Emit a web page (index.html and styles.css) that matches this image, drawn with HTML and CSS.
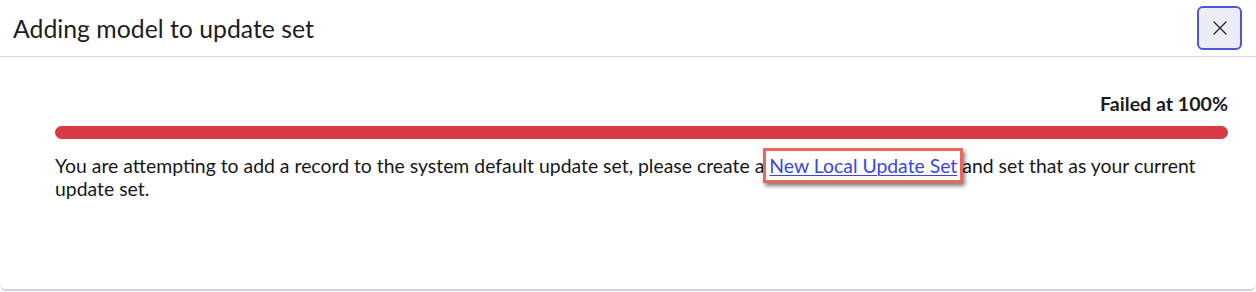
FILE: index.html
```html
<!DOCTYPE html>
<html>
<head>
<meta charset="utf-8">
<link rel="stylesheet" href="styles.css">
</head>
<body>
<div class="dialog">
  <div class="header">
    <h1 class="title">Adding model to update set</h1>
    <button class="close" aria-label="Close">
      <svg width="16" height="16" viewBox="0 0 16 16"><path d="M1.5 1.5 L14.5 14.5 M14.5 1.5 L1.5 14.5" stroke="#2a2a2e" stroke-width="1.4" fill="none"/></svg>
    </button>
  </div>
  <div class="content">
    <div class="status">Failed at 100%</div>
    <div class="bar"></div>
    <p class="message">You are attempting to add a record to the system default update set, please create a <a class="link" href="#">New Local Update Set</a> and set that as your current update set.</p>
  </div>
</div>
</body>
</html>
```
FILE: styles.css
```css
html, body {
  margin: 0;
  padding: 0;
  background: #ffffff;
}
body {
  font-family: Lato, "Noto Sans", sans-serif;
  color: #1c1c1f;
}
.dialog {
  height: 289px;
  border-bottom: 2px solid #d4d4dc;
  border-radius: 0 0 6px 6px;
  background: #fff;
}
.header {
  height: 56px;
  border-bottom: 1px solid #d8d8e0;
  display: flex;
  align-items: center;
  justify-content: space-between;
  padding: 0 14px 0 13px;
}
.title {
  margin: 0;
  font-size: 24.8px;
  font-weight: 400;
  color: #1d1d20;
}
.close {
  width: 45px;
  height: 44px;
  border: 2px solid #4e55d8;
  border-radius: 6px;
  background: #ececf5;
  display: flex;
  align-items: center;
  justify-content: center;
  padding: 0;
}
.content {
  padding: 35px 28px 0 55px;
}
.status {
  text-align: right;
  font-weight: 700;
  font-size: 19.6px;
  line-height: 24px;
  color: #1c1c1f;
}
.bar {
  margin-top: 10px;
  height: 13px;
  border-radius: 7px;
  background: #d73a45;
}
.message {
  margin: 15px 0 0;
  font-size: 19.4px;
  line-height: 23px;
  color: #17171a;
}
.link {
  position: relative;
  color: #3b45e0;
  text-decoration: underline;
  text-decoration-thickness: 1px;
  text-underline-offset: 2px;
}
.link::after {
  content: "";
  position: absolute;
  left: -6px;
  right: -6px;
  top: -6px;
  bottom: -6px;
  border: 3px solid #e8695a;
  box-shadow: 2px 3px 4px rgba(0, 0, 0, 0.5);
  pointer-events: none;
}
```
